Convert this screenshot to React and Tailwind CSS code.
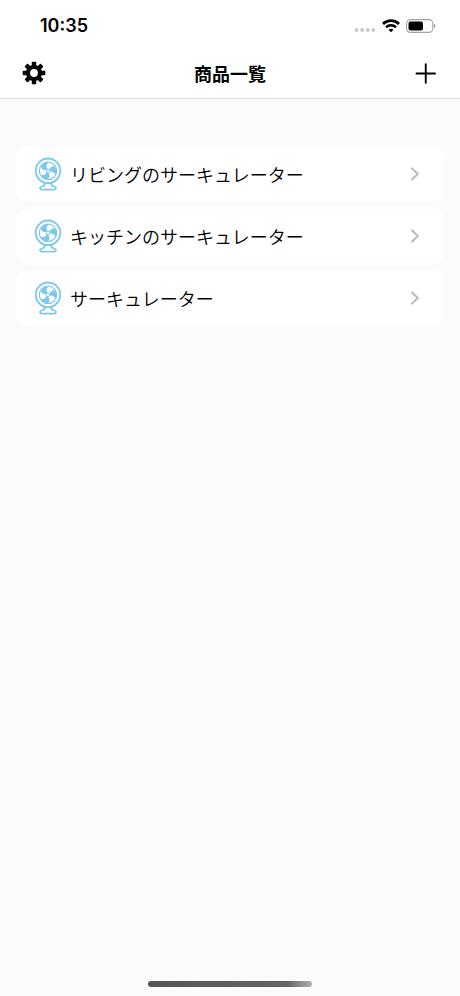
const products = [
  'リビングのサーキュレーター',
  'キッチンのサーキュレーター',
  'サーキュレーター',
];

function SignalIcon() {
  return (
    <svg width="22" height="14" viewBox="0 0 22 14" fill="#cbcbcb" aria-hidden="true">
      <circle cx="2.5" cy="11" r="2" />
      <circle cx="8.1" cy="11" r="2" />
      <circle cx="13.7" cy="11" r="2" />
      <circle cx="19.3" cy="11" r="2" />
    </svg>
  );
}

function WifiIcon() {
  return (
    <svg width="18" height="14" viewBox="0 0 18 14" fill="none" stroke="#000" aria-hidden="true">
      <path d="M1 4.900C5.400.5 12.600.5 17 4.900" strokeWidth="2.8" />
      <path d="M4 8.3c2.8-2.7 7.2-2.7 10 0" strokeWidth="2.6" />
      <path d="M9 13.2 6.5 10.7c1.4-1.3 3.6-1.3 5 0z" fill="#000" stroke="none" />
    </svg>
  );
}

function BatteryIcon() {
  return (
    <svg width="30" height="14" viewBox="0 0 30 14" aria-hidden="true">
      <rect x="0.6" y="0.6" width="26.2" height="12.8" rx="3.8" fill="none" stroke="#a3a3a3" strokeWidth="1.1" />
      <rect x="2.5" y="2.5" width="14.5" height="9" rx="2" fill="#000" />
      <path d="M28 4.8c2 .6 2 3.8 0 4.4z" fill="#a3a3a3" />
    </svg>
  );
}

const teeth = [0, 45, 90, 135];

function GearIcon() {
  return (
    <svg width="24" height="24" viewBox="0 0 24 24" aria-hidden="true">
      {teeth.map((a) => (
        <rect key={a} x="9.8" y="0.7" width="4.4" height="22.6" rx="0.9" transform={`rotate(${a} 12 12)`} />
      ))}
      <circle cx="12" cy="12" r="8" />
      <circle cx="12" cy="12" r="3.9" fill="#fff" />
    </svg>
  );
}

const blades = [0, 120, 240];

function FanIcon() {
  return (
    <svg width="28" height="34" viewBox="0 0 28 34" fill="none" stroke="#7cc8ee" strokeWidth="1.8" aria-hidden="true">
      <path
        d="M10.600 25.800c.4 1.900-.2 2.900-1.500 3.300l-1.600.4c-2 .5-1.900 3.200.3 3.200h12.400c2.200 0 2.300-2.700.3-3.200l-1.600-.4c-1.300-.4-1.900-1.400-1.500-3.300"
        strokeLinecap="round"
        strokeLinejoin="round"
      />
      <circle cx="14" cy="13.8" r="12.3" />
      <circle cx="14" cy="13.8" r="8.700" strokeWidth="1.2" />
      {blades.map((a) => (
        <path
          key={a}
          d="M12.800 12.400C9.800 12 7.600 9.600 9.200 7.200 11 5 14.600 4.800 17 6.200c-2.600.9-3.600 2.800-2.600 5.800z"
          fill="#7cc8ee"
          stroke="none"
          transform={`rotate(${a - 20} 14 13.8)`}
        />
      ))}
      <circle cx="14" cy="13.8" r="1.800" fill="#fff" strokeWidth="1" />
    </svg>
  );
}

export default function App() {
  return (
    <div className="flex min-h-screen flex-col bg-[#fbfbfb] font-['Noto_Sans_CJK_JP',sans-serif] text-black">
      <header className="border-b border-[#dedede] bg-white">
        <div className="flex h-[50px] items-center justify-between pt-0.5 pr-6 pl-10">
          <time className="font-['Inter',sans-serif] text-lg font-semibold">10:35</time>
          <div className="flex items-center gap-[6px]">
            <SignalIcon />
            <WifiIcon />
            <BatteryIcon />
          </div>
        </div>
        <nav className="grid h-12 grid-cols-[1fr_auto_1fr] items-center px-[22px] pb-0.5">
          <button type="button" aria-label="設定" className="justify-self-start">
            <GearIcon />
          </button>
          <h1 className="text-lg font-bold">商品一覧</h1>
          <button type="button" aria-label="追加" className="justify-self-end">
            <svg width="24" height="24" viewBox="0 0 24 24" stroke="#000" strokeWidth="1.9" strokeLinecap="round" aria-hidden="true">
              <path d="M2.500 12.500h18.500M11.750 3.250v18.500" />
            </svg>
          </button>
        </nav>
      </header>
      <main className="flex-1 px-4 pt-12">
        <ul className="flex flex-col gap-2">
          {products.map((name) => (
            <li key={name}>
              <a href="#" className="flex h-[54px] items-center rounded-[10px] bg-white pr-6 pl-[18px]">
                <FanIcon />
                <span className="ml-2 flex-1 text-lg font-[350]">{name}</span>
                <svg width="12" height="16" viewBox="0 0 12 16" fill="none" stroke="#bdbdbf" strokeWidth="2.200" strokeLinecap="round" strokeLinejoin="round" aria-hidden="true">
                  <path d="M4 2.500 9.800 8 4 13.500" />
                </svg>
              </a>
            </li>
          ))}
        </ul>
      </main>
      <footer className="flex justify-center pb-[9px]">
        <div className="h-[6px] w-[164px] rounded-full bg-linear-to-r from-[#555] via-[#646464] via-85% to-[#b0b0b0]" />
      </footer>
    </div>
  );
}
